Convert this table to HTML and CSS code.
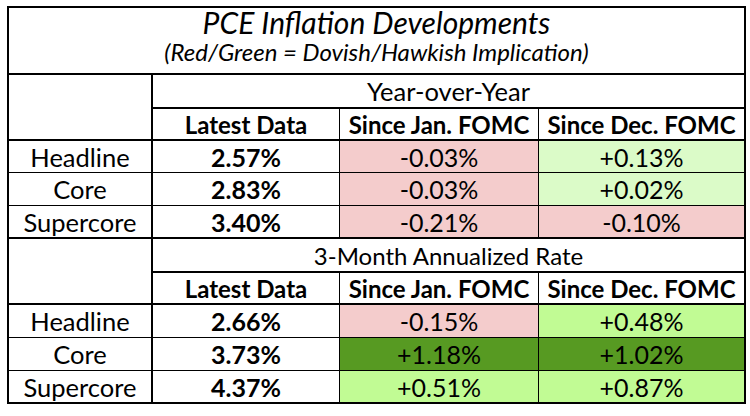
FILE: index.html
```html
<!DOCTYPE html>
<html>
<head>
<meta charset="utf-8">
<link rel="stylesheet" href="styles.css">
</head>
<body>
<div class="tbl">
  <div class="c title b2 last-col">
    <div class="t1">PCE Inflation Developments</div>
    <div class="t2">(Red/Green = Dovish/Hawkish Implication)</div>
  </div>

  <div class="c blank rs2 b2 r2"></div>
  <div class="c sect cs3 b2 last-col">Year-over-Year</div>
  <div class="c hdr b2 r1">Latest Data</div>
  <div class="c hdr b2 r1">Since Jan. FOMC</div>
  <div class="c hdr b2 last-col">Since Dec. FOMC</div>

  <div class="c lbl b1 r2">Headline</div>
  <div class="c val b1 r1">2.57%</div>
  <div class="c num pink b1 r1">-0.03%</div>
  <div class="c num pale b1 last-col">+0.13%</div>

  <div class="c lbl b1 r2">Core</div>
  <div class="c val b1 r1">2.83%</div>
  <div class="c num pink b1 r1">-0.03%</div>
  <div class="c num pale b1 last-col">+0.02%</div>

  <div class="c lbl b2 r2">Supercore</div>
  <div class="c val b2 r1">3.40%</div>
  <div class="c num pink b2 r1">-0.21%</div>
  <div class="c num pink b2 last-col">-0.10%</div>

  <div class="c blank rs2 b2 r2"></div>
  <div class="c sect sect-sm cs3 b2 last-col">3-Month Annualized Rate</div>
  <div class="c hdr b2 r1">Latest Data</div>
  <div class="c hdr b2 r1">Since Jan. FOMC</div>
  <div class="c hdr b2 last-col">Since Dec. FOMC</div>

  <div class="c lbl b1 r2">Headline</div>
  <div class="c val b1 r1">2.66%</div>
  <div class="c num pink b1 r1">-0.15%</div>
  <div class="c num lime b1 last-col">+0.48%</div>

  <div class="c lbl b1 r2">Core</div>
  <div class="c val b1 r1">3.73%</div>
  <div class="c num dark b1 r1">+1.18%</div>
  <div class="c num dark b1 last-col">+1.02%</div>

  <div class="c lbl r2">Supercore</div>
  <div class="c val r1">4.37%</div>
  <div class="c num lime r1">+0.51%</div>
  <div class="c num lime last-col">+0.87%</div>
</div>
</body>
</html>
```

FILE: styles.css
```css
html, body {
  margin: 0;
  padding: 0;
  background: #ffffff;
}

body {
  padding: 6px 0 0 7px;
  font-family: Lato, "Open Sans", sans-serif;
  color: #000000;
}

.tbl {
  box-sizing: border-box;
  width: 739px;
  border: 2px solid #000000;
  display: grid;
  grid-template-columns: 144px 187px 199px 205px;
  grid-template-rows: 67px 34px 32px 32px 33px 33px 34px 32px 33px 33px 31px;
  background: #ffffff;
}

.c {
  box-sizing: border-box;
  display: flex;
  align-items: center;
  justify-content: center;
  white-space: nowrap;
  border-style: solid;
  border-color: #000000;
  border-width: 0;
}

.b1 { border-bottom-width: 1px; }
.b2 { border-bottom-width: 2px; }
.r1 { border-right-width: 1px; }
.r2 { border-right-width: 2px; }

.title {
  grid-column: 1 / 5;
  flex-direction: column;
  justify-content: flex-start;
}

.t1 {
  font-style: italic;
  font-size: 30px;
  line-height: 28px;
}

.t2 {
  font-style: italic;
  font-size: 24px;
  line-height: 31px;
}

.rs2 { grid-row: span 2; }
.cs3 { grid-column: span 3; }

.sect {
  font-size: 25.5px;
}

.sect-sm {
  font-size: 24px;
}

.hdr {
  font-size: 24px;
  font-weight: 700;
}

.lbl {
  font-size: 25.5px;
}

.val {
  font-size: 25px;
  font-weight: 700;
}

.num {
  font-size: 25px;
}

.pink { background: #f4cccc; }
.pale { background: #dbfbc8; }
.lime { background: #c1fb94; }
.dark { background: #579a22; }
```
